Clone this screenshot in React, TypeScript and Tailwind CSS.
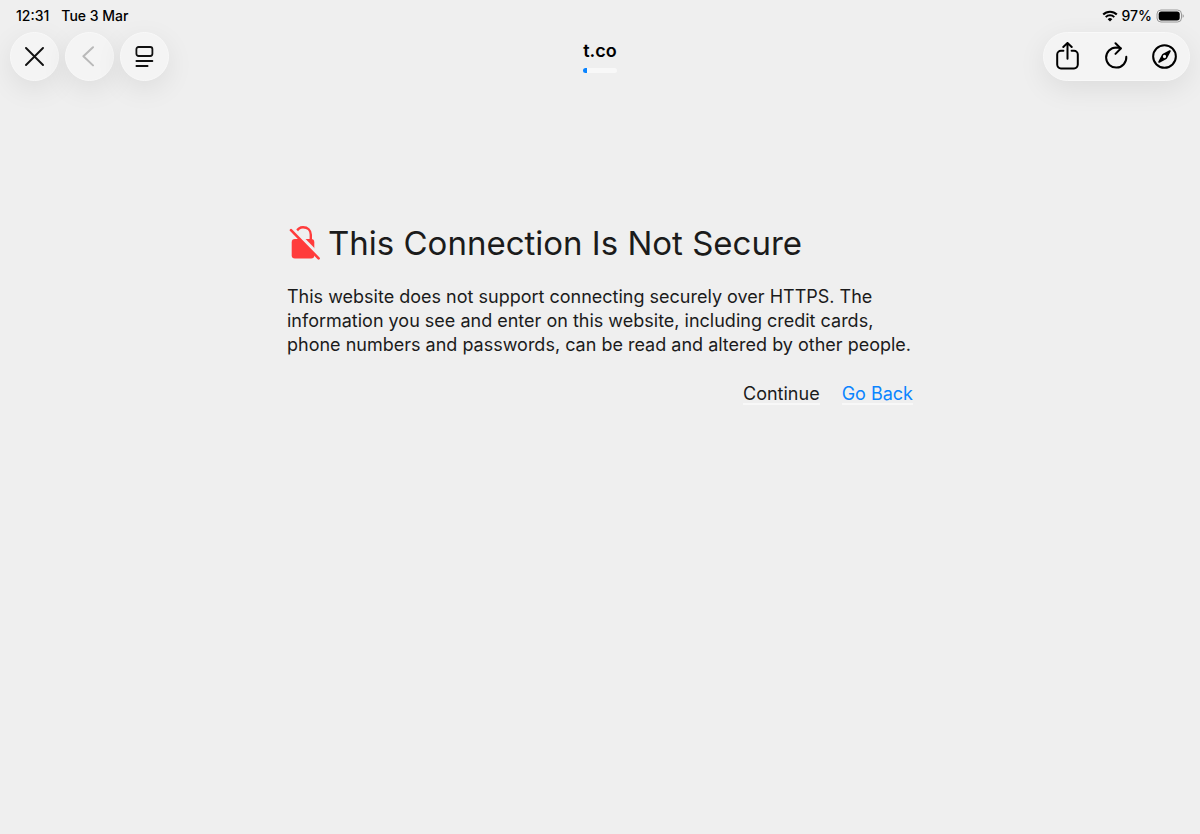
import React from "react";

const glass =
  "rounded-full bg-[#f4f4f4] border border-[#f9f9f9] shadow-[0_8px_28px_rgba(0,0,0,0.08)]";

const StatusBar: React.FC = () => (
  <div className="flex h-8 items-center justify-between px-4 text-sm font-medium text-black">
    <div className="flex gap-3">
      <span>12:31</span>
      <span>Tue 3 Mar</span>
    </div>
    <div className="flex items-center gap-1">
      <svg width="16" height="12" viewBox="0 0 16 12" fill="none" stroke="#000">
        <path d="M1.2 4.6a9.6 9.6 0 0 1 13.6 0" strokeWidth="2.1" />
        <path d="M3.7 7.1a6.2 6.2 0 0 1 8.600 0" strokeWidth="2" />
        <path d="M8 11.6 5.700 9.300a3.200 3.200 0 0 1 4.600 0z" fill="#000" stroke="none" />
      </svg>
      <span>97%</span>
      <svg width="28" height="14" viewBox="0 0 28 14">
        <rect x="1" y="1" width="24.5" height="12" rx="4" fill="none" stroke="#9a9a9a" />
        <rect x="2.7" y="2.6" width="21" height="8.8" rx="2.6" fill="#000" />
        <path d="M26.6 5.200c1.600.500 1.600 3.100 0 3.600z" fill="#9a9a9a" />
      </svg>
    </div>
  </div>
);

const Toolbar: React.FC = () => (
  <header className="grid grid-cols-[1fr_auto_1fr] items-start px-[10px]">
    <div className="flex gap-[6px]">
      <button
        type="button"
        aria-label="Close"
        className={`flex size-[49px] items-center justify-center ${glass}`}
      >
        <svg width="19" height="19" viewBox="0 0 19 19" fill="none" stroke="#111" strokeWidth="1.9" strokeLinecap="round">
          <path d="M1 1l17 17M18 1L1 18" />
        </svg>
      </button>
      <button
        type="button"
        aria-label="Back"
        disabled
        className={`flex size-[49px] items-center justify-center ${glass}`}
      >
        <svg width="15" height="21" viewBox="0 0 15 21" fill="none" stroke="#b9b9b9" strokeWidth="2" strokeLinecap="round" strokeLinejoin="round">
          <path d="M11 1.2L1.4 10.2l9.6 9.2" />
        </svg>
      </button>
      <button
        type="button"
        aria-label="Page menu"
        className={`flex size-[49px] items-center justify-center ${glass}`}
      >
        <svg width="19" height="21" viewBox="0 0 19 21" fill="none" stroke="#111" strokeWidth="1.8" strokeLinecap="round">
          <rect x="1.4" y="1" width="16" height="9" rx="2.2" />
          <path d="M1.4 15h16M1.4 20h11.2" />
        </svg>
      </button>
    </div>

    <div className="flex flex-col items-center pt-[7px]">
      <h1 className="text-lg font-semibold leading-6 text-black">t.co</h1>
      {/* Page load progress */}
      <div className="mt-[5px] h-[5px] w-full overflow-hidden rounded-full bg-[#f8f8f8]">
        <div className="h-full w-1 bg-[#0a84ff]" />
      </div>
    </div>

    <div className={`flex justify-self-end ${glass}`}>
      <button type="button" aria-label="Share" className="flex h-[47px] w-[47px] items-center justify-center">
        <svg width="23" height="29" viewBox="0 0 23 29" fill="none" stroke="#000" strokeWidth="2" strokeLinecap="round" strokeLinejoin="round">
          <path d="M7.4 8.8H5A3.8 3.8 0 0 0 1.2 12.6v10a3.8 3.8 0 0 0 3.8 3.8h13a3.8 3.8 0 0 0 3.8-3.8v-10A3.8 3.8 0 0 0 18 8.8h-2.4" />
          <path d="M11.5 16.8V1.2M7.3 5L11.5.9l4.2 4.1" />
        </svg>
      </button>
      <button type="button" aria-label="Reload" className="flex h-[47px] w-[49px] items-center justify-center">
        <svg width="25" height="29" viewBox="0 0 25 29" fill="none" stroke="#000" strokeWidth="2" strokeLinecap="round" strokeLinejoin="round">
          <path d="M23.3 14.8A10.1 10.1 0 1 1 13.2 5.4q2.4.2 4.4.9" />
          <path d="M12.5 1.2l5.3 5.3-5.3 5.4" />
        </svg>
      </button>
      <button type="button" aria-label="Open in Safari" className="flex h-[47px] w-[49px] items-center justify-center">
        <svg width="25" height="25" viewBox="0 0 26 26" fill="none" stroke="#000">
          <circle cx="13" cy="13" r="11.8" strokeWidth="2.1" />
          <path
            fill="#000"
            stroke="none"
            fillRule="evenodd"
            d="M19.3 6.7c.4.3.3.8.1 1.2l-3.6 6.7a3 3 0 0 1-1.2 1.2l-6.7 3.6c-.9.5-1.7-.4-1.3-1.3l3.6-6.7a3 3 0 0 1 1.2-1.2l6.7-3.6c.4-.2.9-.2 1.2.1zM13 11.3a1.7 1.7 0 1 0 0 3.4 1.7 1.7 0 0 0 0-3.4z"
          />
        </svg>
      </button>
    </div>
  </header>
);

const InsecureLock: React.FC = () => (
  <svg width="33" height="36" viewBox="0 0 33 36" fill="none" aria-hidden="true">
    <path d="M9.4 7C10.6 4 13 2.200 16 2.200c4.600 0 7.800 3 7.800 7.600V17" stroke="#ff3b3b" strokeWidth="2.400" strokeLinecap="round" />
    <rect x="4.700" y="14" width="22.600" height="19.400" rx="3.200" fill="#ff3b3b" />
    <path d="M6 4.400l28 28.400" stroke="#efefef" strokeWidth="4.400" />
    <path d="M4 5.200L31.600 33.400" stroke="#ff3b3b" strokeWidth="2.600" strokeLinecap="round" />
  </svg>
);

export default function App() {
  return (
    <div className="min-h-screen bg-[#efefef] font-['Inter',sans-serif] text-[#1b1b1b]">
      <StatusBar />
      <Toolbar />
      <main className="mx-auto mt-[140px] max-w-[626px]">
        <div className="flex items-center gap-2">
          <InsecureLock />
          <h2 className="whitespace-nowrap text-[33px] leading-[44px]">
            This Connection Is Not Secure
          </h2>
        </div>
        <p className="mt-5 whitespace-nowrap text-[18px] leading-6">
          This website does not support connecting securely over HTTPS. The
          <br />
          information you see and enter on this website, including credit cards,
          <br />
          phone numbers and passwords, can be read and altered by other people.
        </p>
        <div className="mt-7 flex justify-end gap-[22px] text-[18px] leading-[18px]">
          <button type="button" className="border-b-2 border-[#f8f8f8]">
            Continue
          </button>
          <button type="button" className="border-b-2 border-[#f8f8f8] text-[#0a84ff]">
            Go Back
          </button>
        </div>
      </main>
    </div>
  );
}
